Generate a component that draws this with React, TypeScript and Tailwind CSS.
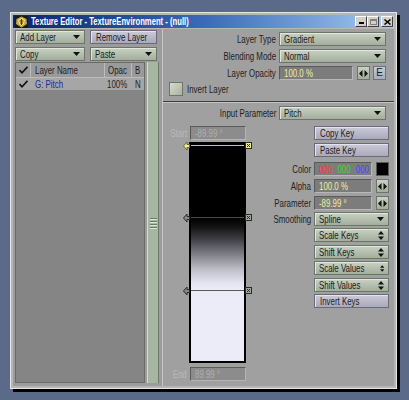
import React from "react";

const FONT = {
  fontFamily: '"Liberation Sans", Arial, sans-serif',
};

// the original UI font is much narrower than anything installed, so squeeze the glyphs
function T({ children, right = false }: { children: React.ReactNode; right?: boolean }) {
  return (
    <span className={`inline-block whitespace-nowrap scale-x-[0.75] ${right ? "origin-right" : "origin-left"}`}>
      {children}
    </span>
  );
}

function DownArrow() {
  return (
    <svg width="7" height="4" viewBox="0 0 7 4">
      <path d="M0 0H7L3.5 4Z" fill="#111" />
    </svg>
  );
}

function UpDown() {
  return (
    <svg width="6" height="9" viewBox="0 0 6 9">
      <path d="M0 3.5H6L3 0Z M0 5.5H6L3 9Z" fill="#111" />
    </svg>
  );
}

function Check() {
  return (
    <svg width="9" height="8" viewBox="0 0 9 8">
      <path d="M0.5 4 L3 6.8 L8.5 0.8" stroke="#111" strokeWidth="1.6" fill="none" />
    </svg>
  );
}

// green drop-down / popup button
function Drop({ label, kind = "down", w }: { label: string; kind?: "down" | "updown"; w: string }) {
  return (
    <div
      className={`flex items-center justify-between h-[14px] pl-[4px] pr-[4px] border border-[#6c7668] bg-gradient-to-b from-[#c8d1c2] to-[#a3ae9d] shadow-[inset_1px_1px_0_#e0e7dc] text-[#1a1a1a] text-[10.5px] leading-none ${w}`}
    >
      <T>{label}</T>
      {kind === "down" ? <DownArrow /> : <UpDown />}
    </div>
  );
}

// purple-grey push button
function Btn({ label, w }: { label: string; w: string }) {
  return (
    <div
      className={`flex items-center h-[14px] pl-[5px] border border-[#6a6a7a] bg-gradient-to-b from-[#cacad8] to-[#a9a9bb] shadow-[inset_1px_1px_0_#e4e4ee] text-[#1a1a1a] text-[10.5px] leading-none ${w}`}
    >
      <T>{label}</T>
    </div>
  );
}

function Field({ children, w, dim = false }: { children: React.ReactNode; w: string; dim?: boolean }) {
  return (
    <div
      className={`flex items-center h-[14px] pl-[4px] border-t border-l border-[#5a5a5a] border-b border-r text-[10.5px] leading-none ${w} ${
        dim ? "bg-[#8c8c8c] border-b-[#b4b4b4] border-r-[#b4b4b4] text-[#b0b0b0]" : "bg-[#7c7c7c] border-b-[#b8b8b8] border-r-[#b8b8b8] text-[#eeee9e]"
      }`}
    >
      <T>{children}</T>
    </div>
  );
}

function Slide() {
  return (
    <div className="flex items-center justify-center w-[13px] h-[14px] border border-[#6c7668] bg-gradient-to-b from-[#c8d1c2] to-[#a3ae9d]">
      <svg width="9" height="7" viewBox="0 0 9 7">
        <path d="M0 3.5 L3.5 0 V7Z M9 3.5 L5.5 0 V7Z" fill="#111" />
      </svg>
    </div>
  );
}

function LeftKey({ sel }: { sel?: boolean }) {
  return (
    <svg width="7" height="10" viewBox="0 0 7 10">
      <path
        d="M0.5 5 L4 1 V3.5 H6.5 V6.5 H4 V9Z"
        fill={sel ? "#f0ee98" : "#8a8a8a"}
        stroke={sel ? "#6a6830" : "#2a2a2a"}
        strokeWidth="1"
      />
    </svg>
  );
}

function RightKey({ sel }: { sel?: boolean }) {
  return (
    <svg width="7" height="7" viewBox="0 0 7 7">
      <rect x="0.5" y="0.5" width="6" height="6" fill={sel ? "#f0ee98" : "#a0a8a0"} stroke="#2a2a2a" />
      <path d="M2 2 L5 5 M5 2 L2 5" stroke="#2a2a2a" strokeWidth="1" />
    </svg>
  );
}

function Row({ label, children }: { label: string; children: React.ReactNode }) {
  return (
    <div className="flex items-center h-[14px]">
      <div className="w-[116px] pr-[3px] text-right text-[10.5px] leading-none text-[#1e1e1e]">
        <T right>{label}</T>
      </div>
      {children}
    </div>
  );
}

function RRow({ label, children, mt }: { label: string; children: React.ReactNode; mt: string }) {
  return (
    <div className={`flex items-center h-[14px] ${mt}`}>
      <div className="flex-1 pr-[3px] text-right text-[10.5px] leading-none text-[#1e1e1e]">
        <T right>{label}</T>
      </div>
      <div className="w-[75px] flex gap-[4px]">{children}</div>
    </div>
  );
}

export default function App() {
  return (
    <div className="w-[409px] h-[400px] bg-[#5a6a88] pt-[12px] pl-[10px] overflow-hidden" style={FONT}>
      <div className="w-[387px] h-[377px] border border-[#e6e6e6] bg-[#b6b6b6] p-[2px] shadow-[3px_3px_0_#000] flex flex-col">
        {/* title bar */}
        <div className="h-[13px] flex items-center bg-gradient-to-r from-[#0a246a] via-[#3a6ab8] to-[#a6caf0] pl-[2px] pr-[1px]">
          <svg width="13" height="12" viewBox="0 0 13 12">
            <rect x="0" y="0" width="13" height="12" fill="#1a1a10" />
            <path d="M6.5 0.5 L11.5 3 L12 8 L6.5 11.5 L1 8 L1.5 3Z" fill="#c8a838" />
            <path d="M3 4 L6.5 2 L10 4 L9 8 L6.5 10 L4 8Z" fill="#f0dc70" />
            <path d="M4.5 5 H8.5 M5 7 H8 M6.5 3 V9" stroke="#4a3a10" strokeWidth="1" />
          </svg>
          <span className="ml-[3px] text-white font-bold text-[10.5px] leading-none inline-block whitespace-nowrap scale-x-[0.73] origin-left">
            Texture Editor - TextureEnvironment - (null)
          </span>
          <div className="ml-auto flex items-center">
            <div className="w-[12px] h-[11px] bg-[#d4d0c8] border-t border-l border-white border-b border-r border-b-[#404040] border-r-[#404040] flex items-end justify-center pb-[2px]">
              <div className="w-[5px] h-[2px] bg-black" />
            </div>
            <div className="w-[12px] h-[11px] bg-[#d4d0c8] border-t border-l border-white border-b border-r border-b-[#404040] border-r-[#404040] flex items-center justify-center">
              <div className="w-[7px] h-[6px] border border-[#808080] border-t-2" />
            </div>
            <div className="ml-[2px] w-[12px] h-[11px] bg-[#d4d0c8] border-t border-l border-white border-b border-r border-b-[#404040] border-r-[#404040] flex items-center justify-center">
              <svg width="7" height="6" viewBox="0 0 7 6">
                <path d="M0.5 0.5 L6.5 5.5 M6.5 0.5 L0.5 5.5" stroke="#000" strokeWidth="1.5" />
              </svg>
            </div>
          </div>
        </div>

        {/* body */}
        <div className="mt-[1px] flex-1 flex bg-[#9c9c9c]">
          {/* left panel */}
          <div className="w-[149px] pl-[2px] pt-[1px] pb-[3px] flex flex-col">
            <div className="flex gap-[5px]">
              <Drop label="Add Layer" w="w-[70px]" />
              <Btn label="Remove Layer" w="w-[67px]" />
            </div>
            <div className="flex gap-[5px] mt-[3px]">
              <Drop label="Copy" w="w-[70px]" />
              <Drop label="Paste" w="w-[67px]" />
            </div>
            <div className="mt-[1px] flex-1 flex gap-[2px]">
              <div className="w-[130px] bg-[#858585] border border-[#6a6a6a] flex flex-col text-[10.5px] leading-none">
                <div className="h-[14px] flex bg-[#9a9a9a] text-[#1e1e1e]">
                  <div className="w-[15px] flex items-center justify-center border-r border-[#bcbcbc]">
                    <Check />
                  </div>
                  <div className="w-[74px] flex items-center pl-[4px] border-r border-[#bcbcbc]">
                    <T>Layer Name</T>
                  </div>
                  <div className="w-[27px] flex items-center pl-[3px] border-r border-[#bcbcbc]">
                    <T>Opac</T>
                  </div>
                  <div className="flex-1 flex items-center pl-[3px]">
                    <T>B</T>
                  </div>
                </div>
                <div className="h-[13px] flex bg-[#a6a6a6] border-t border-[#bcbcbc]">
                  <div className="w-[15px] flex items-center justify-center">
                    <Check />
                  </div>
                  <div className="w-[74px] flex items-center pl-[4px] text-[#22289a]">
                    <T>G: Pitch</T>
                  </div>
                  <div className="w-[27px] flex items-center pl-[2px] text-[#1e1e1e]">
                    <T>100%</T>
                  </div>
                  <div className="flex-1 flex items-center pl-[3px] text-[#1e1e1e]">
                    <T>N</T>
                  </div>
                </div>
              </div>
              <div className="w-[12px] border-l border-[#d2dccc] border-r border-r-[#6e7a68] bg-[#a7b6a0] flex items-center justify-center">
                <div className="flex flex-col gap-[2px]">
                  <div className="w-[7px] h-[1px] bg-[#6e7a68] shadow-[0_1px_0_#dce6d6]" />
                  <div className="w-[7px] h-[1px] bg-[#6e7a68] shadow-[0_1px_0_#dce6d6]" />
                  <div className="w-[7px] h-[1px] bg-[#6e7a68] shadow-[0_1px_0_#dce6d6]" />
                  <div className="w-[7px] h-[1px] bg-[#6e7a68] shadow-[0_1px_0_#dce6d6]" />
                </div>
              </div>
            </div>
          </div>

          {/* right panel */}
          <div className="flex-1 flex flex-col border-l border-[#c8c8c8] bg-[#a0a0a0]">
            <div className="pb-[5px] border-b border-[#3c3c3c]">
              <div className="mt-[3px]">
                <Row label="Layer Type">
                  <Drop label="Gradient" w="w-[107px]" />
                </Row>
              </div>
              <div className="mt-[3px]">
                <Row label="Blending Mode">
                  <Drop label="Normal" w="w-[107px]" />
                </Row>
              </div>
              <div className="mt-[3px]">
                <Row label="Layer Opacity">
                  <Field w="w-[74px]">100.0 %</Field>
                  <div className="ml-[4px]">
                    <Slide />
                  </div>
                  <div className="ml-[3px] w-[13px] h-[14px] border border-[#6a7280] bg-gradient-to-b from-[#c4ccd6] to-[#a4aebc] flex items-center justify-center text-[10px] leading-none text-[#1a1a1a]">
                    E
                  </div>
                </Row>
              </div>
              <div className="mt-[2px] h-[14px] flex items-center pl-[6px]">
                <div className="w-[14px] h-[14px] border border-[#6c7668] bg-gradient-to-br from-[#d6dccc] to-[#aab29e]" />
                <span className="ml-[4px] text-[10.5px] leading-none text-[#1e1e1e]">
                  <T>Invert Layer</T>
                </span>
              </div>
            </div>

            <div className="flex-1 border-t border-[#c4c4c4] flex flex-col">
              <div className="mt-[3px]">
                <Row label="Input Parameter">
                  <Drop label="Pitch" w="w-[107px]" />
                </Row>
              </div>

              <div className="mt-[6px] flex">
                {/* gradient column */}
                <div className="w-[96px] flex flex-col">
                  <div className="flex items-center h-[14px]">
                    <div className="w-[24px] text-right text-[10.5px] leading-none text-[#bababa]">
                      <T right>Start</T>
                    </div>
                    <div className="ml-[3px]">
                      <Field w="w-[56px]" dim>
                        -89.99 °
                      </Field>
                    </div>
                  </div>
                  <div className="ml-[26px] mt-[2px] relative w-[57px] h-[221px]">
                    <div className="w-full h-full border-2 border-black bg-[linear-gradient(to_bottom,#000_0%,#000_34%,#121212_38%,#404044_44%,#808088_51%,#c0c0cc_58%,#e4e4f0_64%,#ececf8_67%,#ececf8_100%)]" />
                    {/* key lines */}
                    <div className="absolute left-[2px] right-[2px] top-[3px] h-[1px] bg-[#c8c48a]" />
                    <div className="absolute left-[2px] right-[2px] top-[75px] h-[1px] bg-[#4a4a4a]" />
                    <div className="absolute left-[2px] right-[2px] top-[148px] h-[1px] bg-[#5a5a5a]" />
                    {/* key markers */}
                    <div className="absolute left-[-6px] top-[-1px]">
                      <LeftKey sel />
                    </div>
                    <div className="absolute right-[-6px] top-[0px]">
                      <RightKey sel />
                    </div>
                    <div className="absolute left-[-6px] top-[71px]">
                      <LeftKey />
                    </div>
                    <div className="absolute right-[-6px] top-[72px]">
                      <RightKey />
                    </div>
                    <div className="absolute left-[-6px] top-[144px]">
                      <LeftKey />
                    </div>
                    <div className="absolute right-[-6px] top-[145px]">
                      <RightKey />
                    </div>
                  </div>
                  <div className="flex items-center h-[14px] mt-[4px]">
                    <div className="w-[24px] text-right text-[10.5px] leading-none text-[#bababa]">
                      <T right>End</T>
                    </div>
                    <div className="ml-[3px]">
                      <Field w="w-[56px]" dim>
                        89.99 °
                      </Field>
                    </div>
                  </div>
                </div>

                {/* key controls */}
                <div className="flex-1 pr-[5px] flex flex-col">
                  <div className="flex justify-end">
                    <Btn label="Copy Key" w="w-[75px]" />
                  </div>
                  <div className="flex justify-end mt-[3px]">
                    <Btn label="Paste Key" w="w-[75px]" />
                  </div>
                  <RRow label="Color" mt="mt-[5px]">
                    <Field w="w-[58px]">
                      <span className="text-[#ff3838]">000</span>
                      <span className="ml-[7px] text-[#38d838]">000</span>
                      <span className="ml-[7px] text-[#4848ff]">000</span>
                    </Field>
                    <div className="w-[13px] h-[14px] bg-black border border-[#5a5a5a]" />
                  </RRow>
                  <RRow label="Alpha" mt="mt-[3px]">
                    <Field w="w-[58px]">100.0 %</Field>
                    <Slide />
                  </RRow>
                  <RRow label="Parameter" mt="mt-[3px]">
                    <Field w="w-[58px]">-89.99 °</Field>
                    <Slide />
                  </RRow>
                  <RRow label="Smoothing" mt="mt-[2px]">
                    <Drop label="Spline" w="w-[75px]" />
                  </RRow>
                  <div className="flex justify-end mt-[2px]">
                    <Drop label="Scale Keys" kind="updown" w="w-[75px]" />
                  </div>
                  <div className="flex justify-end mt-[3px]">
                    <Drop label="Shift Keys" kind="updown" w="w-[75px]" />
                  </div>
                  <div className="flex justify-end mt-[2px]">
                    <Drop label="Scale Values" kind="updown" w="w-[75px]" />
                  </div>
                  <div className="flex justify-end mt-[3px]">
                    <Drop label="Shift Values" kind="updown" w="w-[75px]" />
                  </div>
                  <div className="flex justify-end mt-[2px]">
                    <Btn label="Invert Keys" w="w-[75px]" />
                  </div>
                </div>
              </div>
            </div>
          </div>
        </div>
      </div>
    </div>
  );
}
